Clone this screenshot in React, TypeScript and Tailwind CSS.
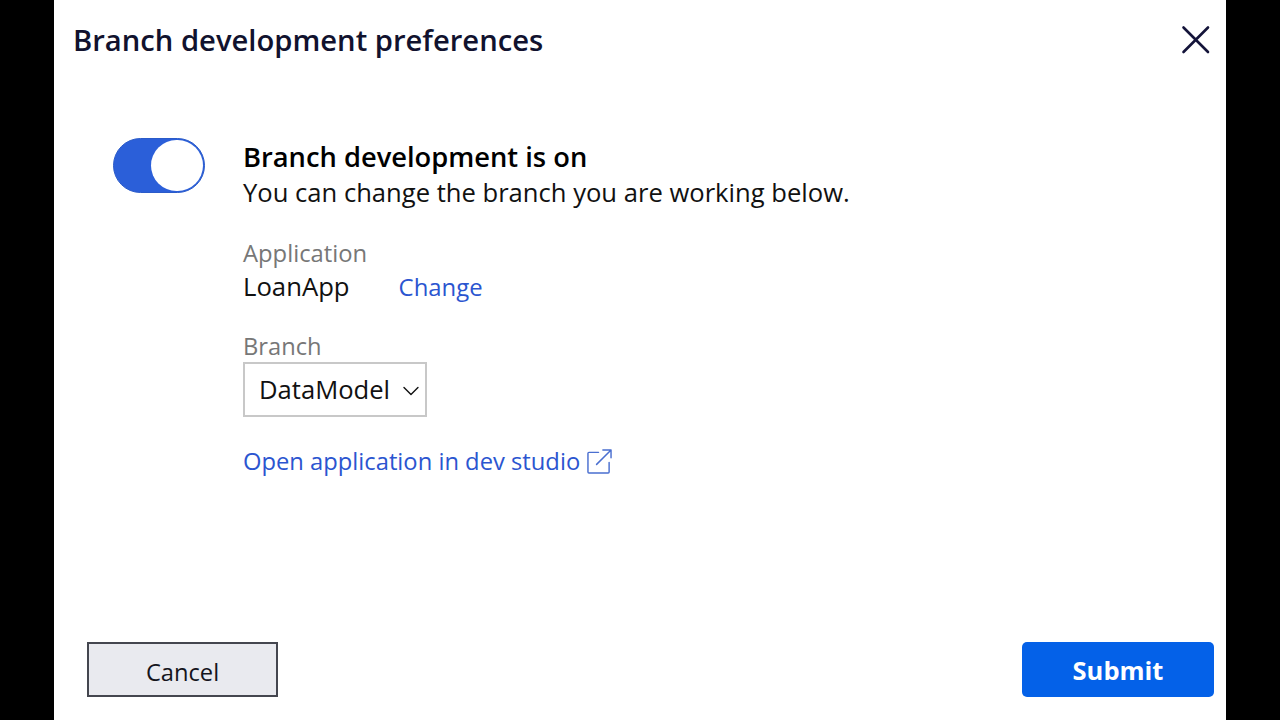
import { ChevronDown } from "lucide-react";

export default function App() {
  return (
    <div className="flex h-[720px] w-[1280px] justify-center overflow-hidden bg-black font-['Open_Sans',sans-serif]">
      <div className="flex h-full w-[1172px] flex-col bg-white">
        <div className="flex items-center justify-between pl-[19px] pr-[14px] pt-[21px]">
          <h1 className="text-[29.2px] font-semibold leading-[38px] text-[#11122e]">Branch development preferences</h1>
          <svg width="32" height="32" viewBox="0 0 32 32" fill="none" stroke="#14143a" strokeWidth="2.6" strokeLinecap="round">
            <path d="M3.5 3.5 L28 28 M28 3.5 L3.5 28" />
          </svg>
        </div>

        <div className="flex pl-[59px] pt-[78px]">
          <div className="relative mt-[1px] h-[55px] w-[92px] rounded-full border border-[#2b5bc9] bg-[#2b5fd9]">
            <div className="absolute bottom-[1px] right-[1px] top-[1px] w-[52px] rounded-full bg-white" />
          </div>
          <div className="ml-[38px] flex flex-col items-start">
            <div className="mt-[2px] text-[27.3px] font-semibold leading-[36px] text-black">Branch development is on</div>
            <div className="text-[25.6px] leading-[36px] text-[#111]">You can change the branch you are working below.</div>

            <div className="mt-[26px] text-[23.8px] leading-[32px] text-[#777]">Application</div>
            <div className="flex items-center leading-[36px]">
              <span className="text-[25.7px] text-[#111]">LoanApp</span>
              <a className="ml-[49px] text-[23.9px] text-[#2b55d0]">Change</a>
            </div>

            <div className="mt-[25px] text-[23.7px] leading-[32px] text-[#777]">Branch</div>
            <div className="flex h-[55px] w-[184px] items-center border-2 border-[#c8c8c8] pl-[14px] pt-[2px]">
              <span className="text-[25.6px] text-[#111]">DataModel</span>
              <ChevronDown className="ml-[7px] h-[28px] w-[28px] text-[#111]" strokeWidth={1.2} />
            </div>

            <div className="mt-[26px] flex items-center">
              <a className="text-[23.75px] leading-[36px] text-[#2b55d0]">Open application in dev studio</a>
              <svg className="ml-[7px]" width="25" height="25" viewBox="0 0 26 26" fill="none" stroke="#4a6fd0" strokeWidth="1.5" strokeLinecap="round" strokeLinejoin="round">
                <path d="M12 3.5 H2 a1 1 0 0 0 -1 1 V24 a1 1 0 0 0 1 1 H22 a1 1 0 0 0 1 -1 V14" />
                <path d="M10 16 L25 1 M16.5 1 H25 V9" />
              </svg>
            </div>
          </div>
        </div>

        <div className="mt-auto flex items-center justify-between pb-[23px] pl-[33px] pr-[12px]">
          <button className="h-[55px] w-[191px] border-2 border-[#44464f] bg-[#e9eaef] pt-[6px] text-[23.7px] text-[#14141c]">Cancel</button>
          <button className="h-[55px] w-[192px] rounded-[5px] bg-[#0461e8] pt-[1px] text-[25.5px] font-bold text-white">Submit</button>
        </div>
      </div>
    </div>
  );
}
